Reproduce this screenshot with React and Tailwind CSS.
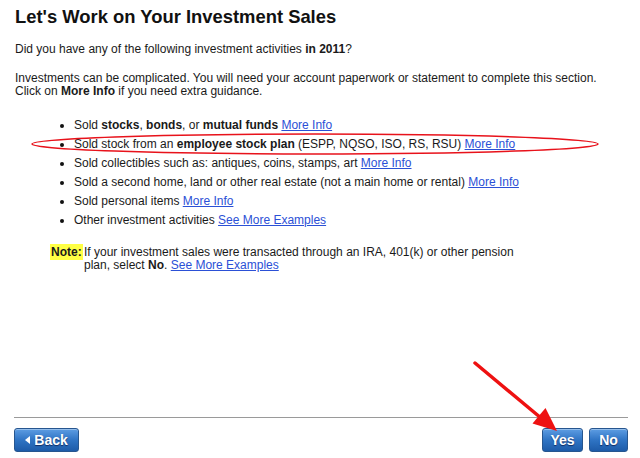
import React from "react";

const font = { fontFamily: '"Liberation Sans", Arial, sans-serif' };

function Link({ children }) {
  return <span className="text-[#2b50d6] underline cursor-pointer">{children}</span>;
}

function Bullet({ children }) {
  return (
    <li className="flex items-center h-[19px]">
      <span className="ml-[45px] w-[4px] h-[4px] rounded-full bg-[#111] shrink-0" />
      <span className="ml-[10px] whitespace-nowrap">{children}</span>
    </li>
  );
}

function Btn({ children, w }) {
  return (
    <button
      className={`${w} h-[24px] rounded-[3px] border border-[#27568f] bg-gradient-to-b from-[#5d9de3] via-[#2f74c4] to-[#1d5ba8] text-white font-bold text-[14px] flex items-center justify-center [text-shadow:0_1px_1px_rgba(0,0,40,0.6)] shadow-[inset_0_1px_0_rgba(255,255,255,0.35)]`}
      style={font}
    >
      {children}
    </button>
  );
}

export default function App() {
  return (
    <div className="relative w-[640px] h-[458px] bg-white flex flex-col text-[#1a1a1a] overflow-hidden" style={font}>
      <div className="flex-1 pl-[15px]">
        <h1 className="pt-[6px] text-[18.4px] leading-[22px] font-bold text-[#111]">Let's Work on Your Investment Sales</h1>
        <p className="mt-[15px] text-[12px] leading-[13px]">
          Did you have any of the following investment activities <b>in 2011</b>?
        </p>
        <p className="mt-[16px] text-[12px] leading-[13px]">
          Investments can be complicated. You will need your account paperwork or statement to complete this section.
          <br />
          Click on <b>More Info</b> if you need extra guidance.
        </p>
        <ul className="mt-[18px] text-[12px] leading-[13px]">
          <Bullet>
            Sold <b>stocks</b>, <b>bonds</b>, or <b>mutual funds</b> <Link>More Info</Link>
          </Bullet>
          <Bullet>
            Sold stock from an <b>employee stock plan</b> (ESPP, NQSO, ISO, RS, RSU) <Link>More Info</Link>
          </Bullet>
          <Bullet>
            Sold collectibles such as: antiques, coins, stamps, art <Link>More Info</Link>
          </Bullet>
          <Bullet>
            Sold a second home, land or other real estate (not a main home or rental) <Link>More Info</Link>
          </Bullet>
          <Bullet>
            Sold personal items <Link>More Info</Link>
          </Bullet>
          <Bullet>
            Other investment activities <Link>See More Examples</Link>
          </Bullet>
        </ul>
        <div className="mt-[16px] ml-[35px] flex text-[12px] leading-[13px]">
          <div className="w-[34px] shrink-0">
            <span className="bg-[#ffff44] font-bold px-[1px] py-[1px]">Note:</span>
          </div>
          <div className="w-[440px]">
            If your investment sales were transacted through an IRA, 401(k) or other pension plan, select <b>No</b>.{" "}
            <Link>See More Examples</Link>
          </div>
        </div>
      </div>

      <div className="ml-[14px] mr-[12px] border-t border-[#9a9a9a] pt-[10px] pb-[6px] flex items-center">
        <Btn w="w-[65px]">
          <span className="inline-block w-0 h-0 border-y-[4px] border-y-transparent border-r-[5px] border-r-white mr-[4px]" />
          Back
        </Btn>
        <div className="flex-1" />
        <Btn w="w-[41px]">Yes</Btn>
        <div className="w-[6px]" />
        <Btn w="w-[39px]">No</Btn>
      </div>

      <svg className="absolute left-0 top-0 pointer-events-none" width="640" height="458">
        <ellipse cx="315" cy="144" rx="283" ry="10" fill="none" stroke="#e8121b" strokeWidth="1.6" />
        <line x1="475" y1="363" x2="541" y2="418" stroke="#ee1111" strokeWidth="3.5" strokeLinecap="round" />
        <polygon points="557,431 532.5,423.5 545.5,408" fill="#ee1111" />
      </svg>
    </div>
  );
}
